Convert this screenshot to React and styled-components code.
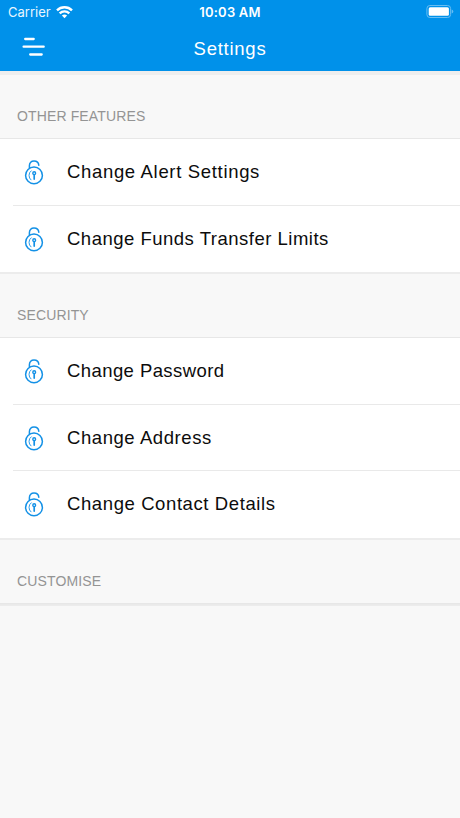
import styled, { createGlobalStyle } from "styled-components";

const GlobalStyle = createGlobalStyle`
  * {
    box-sizing: border-box;
  }

  body {
    margin: 0;
    background: #f8f8f8;
    font-family: "Liberation Sans", Arial, sans-serif;
  }
`;

const sections = [
  {
    title: "OTHER FEATURES",
    items: [
      { label: "Change Alert Settings", tracking: 0.67 },
      { label: "Change Funds Transfer Limits", tracking: 0.5 },
    ],
  },
  {
    title: "SECURITY",
    items: [
      { label: "Change Password", tracking: 0.42 },
      { label: "Change Address", tracking: 0.57 },
      { label: "Change Contact Details", tracking: 0.6 },
    ],
  },
  {
    title: "CUSTOMISE",
    items: [],
  },
];

const Screen = styled.div`
  display: flex;
  flex-direction: column;
  min-height: 818px;
  background: #f8f8f8;
`;

const Header = styled.header`
  display: flex;
  flex-direction: column;
  height: 75px;
  background: #0091ea;
  color: #fff;
  border-bottom: 4px solid #eeeeee;
`;

const StatusBar = styled.div`
  display: grid;
  grid-template-columns: 1fr auto 1fr;
  align-items: center;
  height: 24px;
  padding: 0 6px 0 8px;
  font-family: Inter, sans-serif;
  font-size: 13px;
`;

const Carrier = styled.div`
  display: flex;
  align-items: center;
  gap: 5px;
  color: #e8f6ff;
`;

const Time = styled.span`
  margin-right: 2px;
  font-weight: 600;
  letter-spacing: 0.2px;
`;

const BatterySlot = styled.div`
  display: flex;
  justify-content: flex-end;
  padding-bottom: 1px;
`;

const NavBar = styled.div`
  display: grid;
  grid-template-columns: 1fr auto 1fr;
  align-items: center;
  height: 47px;
  padding: 0 22px;
`;

const MenuButton = styled.button`
  display: flex;
  width: 24px;
  padding: 0 0 2px;
  border: 0;
  background: none;
  cursor: pointer;
`;

const Title = styled.h1`
  margin: 0;
  padding-top: 2px;
  font-size: 18.5px;
  font-weight: 400;
  line-height: 45px;
  letter-spacing: 0.75px;
`;

const SectionTitle = styled.h2`
  height: 63px;
  margin: 0;
  padding: 31px 17px 0;
  color: #949494;
  font-size: 14px;
  font-weight: 400;
  line-height: 20px;
  letter-spacing: 0.13px;
`;

const List = styled.ul`
  margin: 0;
  padding: 0;
  list-style: none;
  background: ${props => props.$empty ? "#eaeaea" : "#fff"};
  border-top: 1px solid #e7e7e7;
  border-bottom: ${props => props.$empty ? "1px" : "2px"} solid #ececec;
  min-height: 3px;
`;

const Row = styled.li`
  display: flex;
  align-items: center;
  height: 66px;
  margin-left: 13px;
  padding-left: 11px;
  cursor: pointer;

  &:last-child {
    height: 67px;
  }

  &:nth-child(3) {
    height: 67.5px;
    padding-bottom: 1px;
  }

  & + & {
    border-top: 1px solid #e9e9e9;
  }
`;

const Label = styled.span`
  margin-left: 23px;
  color: #0c0c0c;
  font-size: 18.5px;
  letter-spacing: ${props => props.$tracking}px;
`;

const WifiIcon = () => (
  <svg width="17" height="13" viewBox="0 0 17 13" fill="none" stroke="#fff" strokeWidth="2.4">
    <path d="M1 4.3a10.8 10.8 0 0 1 15 0" />
    <path d="M3.7 7.4a6.8 6.8 0 0 1 9.6 0" />
    <path d="M8.5 12.3 5.9 9.6a3.9 3.9 0 0 1 5.2 0z" fill="#fff" stroke="none" />
  </svg>
);

const BatteryIcon = () => (
  <svg width="28" height="13" viewBox="0 0 28 13">
    <rect x="0.9" y="0.5" width="23.7" height="12" rx="3" fill="none" stroke="#68bdf2" />
    <rect x="2.7" y="2.2" width="20.2" height="8.6" rx="1.5" fill="#fff" />
    <path d="M25.7 4.5q1.6.6 1.6 2t-1.6 2z" fill="#68bdf2" />
  </svg>
);

const MenuIcon = () => (
  <svg width="24" height="22" viewBox="0 0 24 22" stroke="#fff" strokeWidth="2.3" strokeLinecap="round">
    <path d="M3.2 3H11.7M1.6 10.7H21.7M8.2 18.5H19.7" />
  </svg>
);

const LockIcon = () => (
  <svg width="20" height="26" viewBox="0 0 20 26" fill="none" stroke="#1491e6" strokeLinecap="round">
    <circle cx="10" cy="16.4" r="8.4" strokeWidth="1.5" />
    <path d="M5.4 9V6.8C5.4 3.8 7.3 2.1 10 2.1c2.7 0 4.6 1.7 4.8 4.2" strokeWidth="1.5" />
    <path d="M7.2 11.8a5.7 5.7 0 0 0-.2 9.1" strokeWidth="0.9" />
    <circle cx="10.2" cy="14.2" r="1.4" strokeWidth="1.4" />
    <path d="M10.2 15.8v4.3" strokeWidth="1.7" />
  </svg>
);

const Section = ({ title, items }) => (
  <section>
    <SectionTitle>{title}</SectionTitle>
    <List $empty={items.length === 0}>
      {items.map(item => (
        <Row key={item.label}>
          <LockIcon />
          <Label $tracking={item.tracking}>{item.label}</Label>
        </Row>
      ))}
    </List>
  </section>
);

const App = () => (
  <Screen>
    <GlobalStyle />
    <Header>
      <StatusBar>
        <Carrier>
          Carrier
          <WifiIcon />
        </Carrier>
        <Time>10:03 AM</Time>
        <BatterySlot>
          <BatteryIcon />
        </BatterySlot>
      </StatusBar>
      <NavBar>
        <MenuButton aria-label="Menu">
          <MenuIcon />
        </MenuButton>
        <Title>Settings</Title>
      </NavBar>
    </Header>
    {sections.map(section => (
      <Section key={section.title} {...section} />
    ))}
  </Screen>
);

export default App;
